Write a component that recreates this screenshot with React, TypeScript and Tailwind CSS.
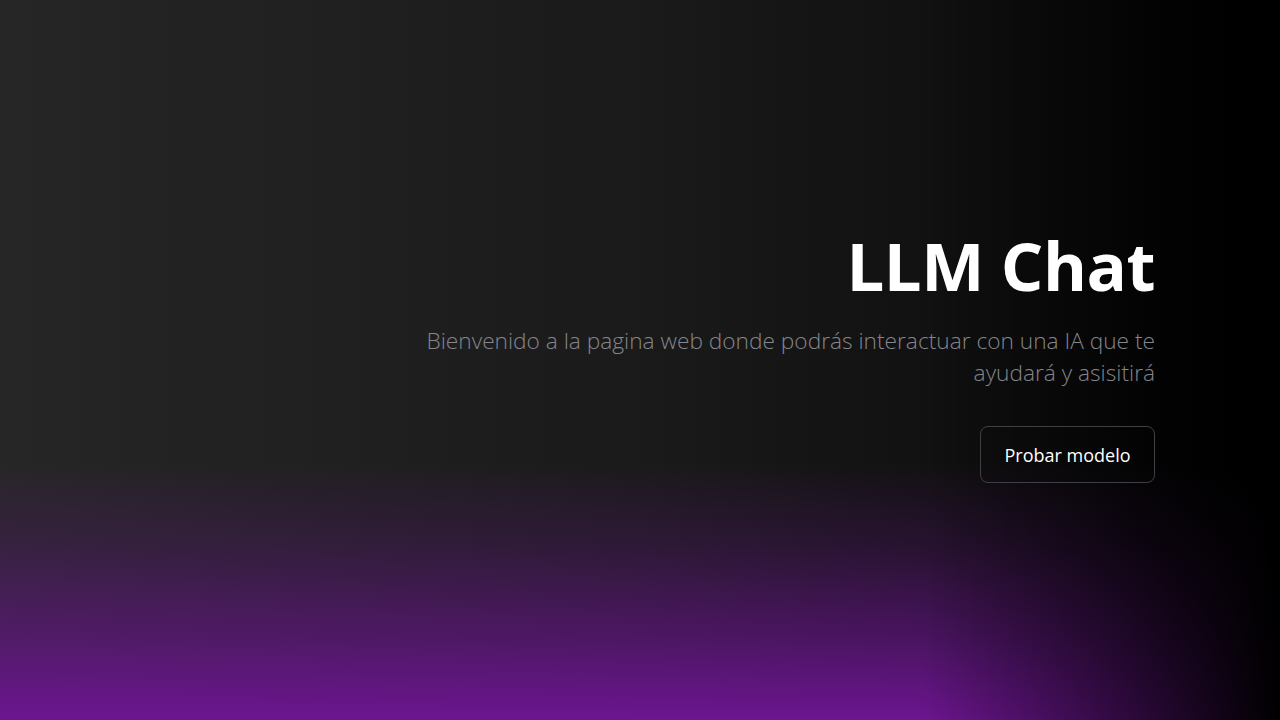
export default function App() {
  return (
    <main
      className="h-screen w-full flex items-center justify-end pr-[125px] pb-[5px] bg-[linear-gradient(to_right,transparent_72%,#000_100%),linear-gradient(to_top,#6c1590_0%,rgba(108,21,144,0.6)_12%,rgba(108,21,144,0.25)_24%,transparent_36%),linear-gradient(to_right,#262626_0%,#1a1a1a_50%,#0c0c0c_85%,#000_100%)]"
      style={{ fontFamily: '"Open Sans", "Noto Sans", sans-serif' }}
    >
      <section className="flex flex-col items-end text-right max-w-[760px]">
        <h1 className="text-[67px] leading-none font-bold text-white tracking-[-0.5px]">
          LLM Chat
        </h1>
        <p className="mt-[26px] text-[22.7px] leading-8 font-light text-[#85858c]">
          Bienvenido a la pagina web donde podrás interactuar con una IA que te
          ayudará y asisitirá
        </p>
        <button
          type="button"
          className="mt-[37px] h-[57px] w-[175px] rounded-lg border border-[#3f3f46] text-white text-lg font-medium hover:bg-white/5 transition-colors"
        >
          Probar modelo
        </button>
      </section>
    </main>
  );
}
